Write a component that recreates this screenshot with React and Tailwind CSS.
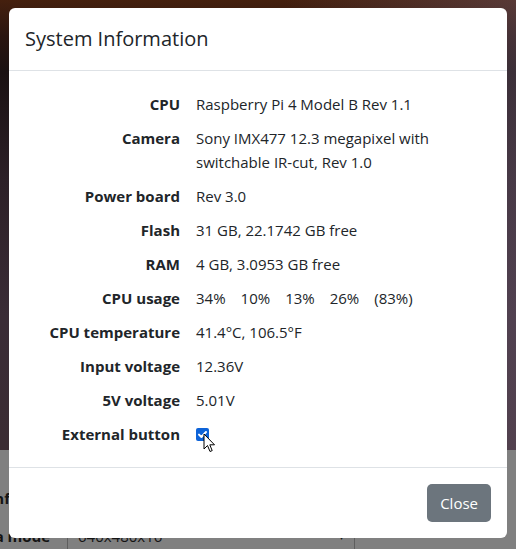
import React from 'react';

const rows = [
  { label: 'CPU', value: 'Raspberry Pi 4 Model B Rev 1.1' },
  { label: 'Camera', value: 'Sony IMX477 12.3 megapixel with switchable IR-cut, Rev 1.0' },
  { label: 'Power board', value: 'Rev 3.0' },
  { label: 'Flash', value: '31 GB, 22.1742 GB free' },
  { label: 'RAM', value: '4 GB, 3.0953 GB free' },
  { label: 'CPU usage', usage: ['34%', '10%', '13%', '26%', '(83%)'] },
  { label: 'CPU temperature', value: '41.4°C, 106.5°F' },
  { label: 'Input voltage', value: '12.36V' },
  { label: '5V voltage', value: '5.01V' },
  { label: 'External button', checkbox: true },
];

function Cursor() {
  return (
    <svg className="absolute left-[7px] top-[11px]" width="13" height="21" viewBox="0 0 13 21">
      <path
        d="M1 1 L1 16 L4.5 12.5 L7 18.5 L9.2 17.6 L6.8 11.8 L11.5 11.8 Z"
        fill="#fff"
        stroke="#000"
        strokeWidth="1"
        strokeLinejoin="round"
      />
    </svg>
  );
}

export default function App() {
  return (
    <div
      className="relative w-[516px] h-[549px] overflow-hidden bg-[#808080] text-[#212529]"
      style={{ fontFamily: '"Open Sans", "Noto Sans", sans-serif' }}
    >
      {/* page behind the modal (dimmed) */}
      <div className="h-[450px] bg-[linear-gradient(90deg,rgba(0,0,0,0)_55%,rgba(125,105,130,0.35)_100%),linear-gradient(180deg,#45200e_0%,#2a1510_8%,#1a1112_16%,#2c2027_40%,#3a2c36_70%,#3b2c33_100%)]"></div>
      <div className="flex flex-col text-[15px] text-[#141414]">
        <div className="flex items-center h-[40px] mt-[28px]">
          <div className="w-[10px] flex justify-end font-bold whitespace-nowrap">Camera conf</div>
        </div>
        <div className="flex items-center h-[36px]">
          <div className="w-[50px] flex justify-end font-bold whitespace-nowrap">Camera mode</div>
          <div className="ml-[17px] w-[288px] h-[36px] border border-[#5e5e5e] rounded-[3px] flex items-center justify-between px-[10px]">
            <span>640x480x16</span>
            <span className="text-[10px]">▾</span>
          </div>
        </div>
      </div>

      {/* modal */}
      <div className="absolute left-[9px] top-[8px] w-[498px] bg-white rounded-[6px] flex flex-col">
        <div className="px-4 py-4 border-b border-[#dee2e6]">
          <h5 className="text-[20px] leading-[30px] font-medium">System Information</h5>
        </div>
        <div className="p-4">
          <div className="grid grid-cols-[155px_1fr] gap-x-4 text-[15px] leading-[24px]">
            {rows.map((r) => (
              <React.Fragment key={r.label}>
                <div className="py-[5px] text-right font-bold whitespace-nowrap">{r.label}</div>
                <div className="py-[5px] pr-6">
                  {r.usage ? (
                    <div className="flex gap-[15px]">
                      {r.usage.map((u, i) => (
                        <span key={i}>{u}</span>
                      ))}
                    </div>
                  ) : r.checkbox ? (
                    <div className="relative h-[24px] flex items-center">
                      <span className="w-[13px] h-[13px] rounded-[2px] bg-[#0d63d8] flex items-center justify-center">
                        <svg width="11" height="11" viewBox="0 0 11 11">
                          <path d="M2 5.6 L4.4 8 L9 3" fill="none" stroke="#fff" strokeWidth="2" strokeLinecap="round" strokeLinejoin="round" />
                        </svg>
                      </span>
                      <Cursor />
                    </div>
                  ) : (
                    r.value
                  )}
                </div>
              </React.Fragment>
            ))}
          </div>
        </div>
        <div className="border-t border-[#dee2e6] px-4 py-4 flex justify-end">
          <button className="h-[38px] px-[13px] rounded-[5px] bg-[#6c757d] text-white text-[15px]">Close</button>
        </div>
      </div>
    </div>
  );
}
